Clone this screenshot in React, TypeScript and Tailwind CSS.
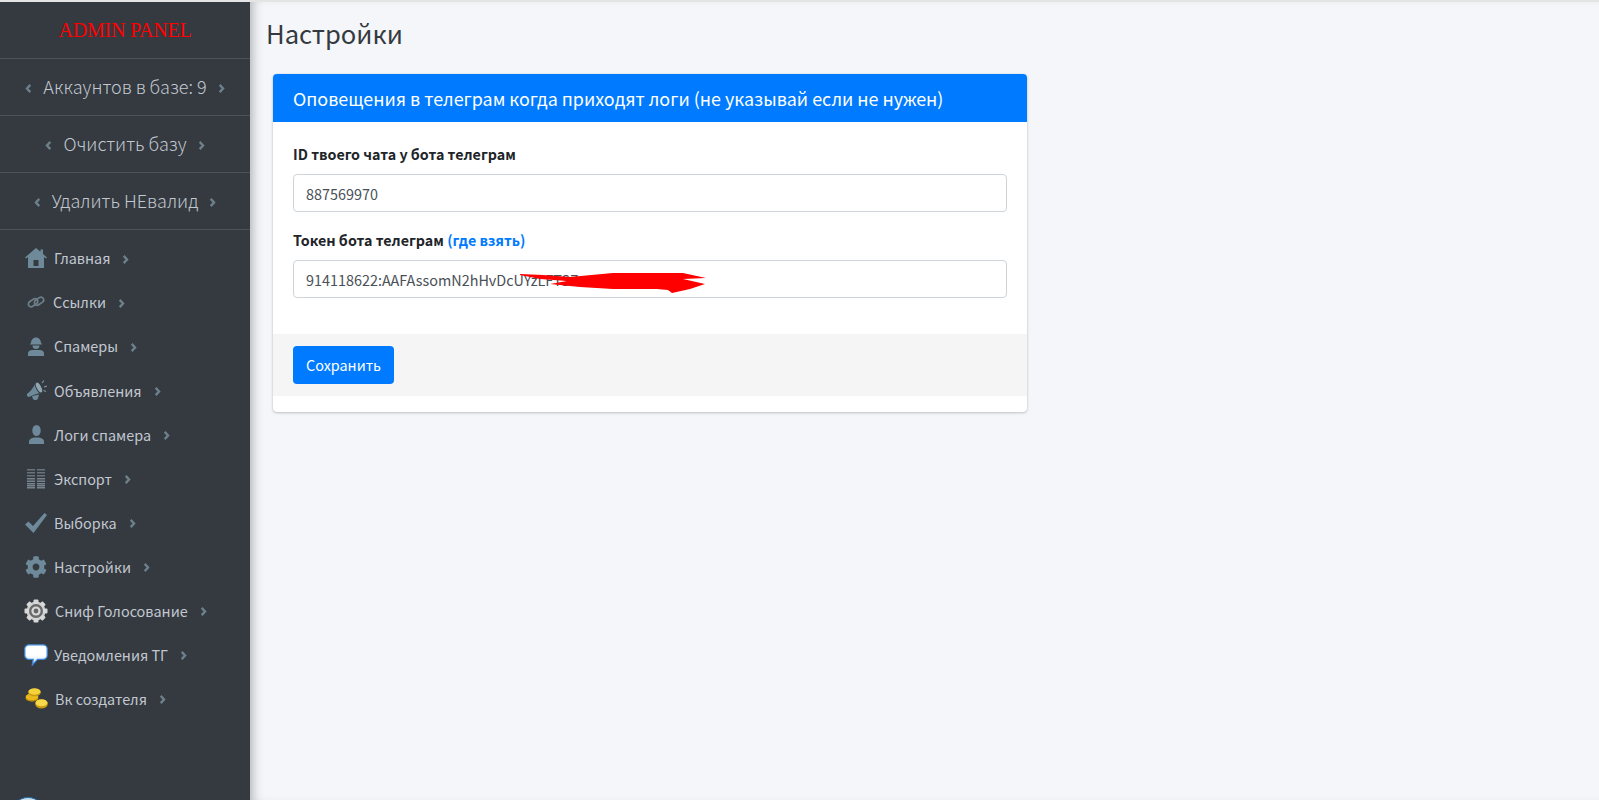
import { FaCog } from "react-icons/fa";
import type { ReactNode } from "react";

function Chevron({ left }: { left?: boolean }) {
  return (
    <svg viewBox="0 0 7 10" className="mt-[2px] h-[9px] w-[7px] shrink-0 fill-none stroke-[#6e808c] stroke-[2.6]">
      <polyline points={left ? "5.5,1 1.8,5 5.5,9" : "1.5,1 5.2,5 1.5,9"} />
    </svg>
  );
}

function HomeIcon() {
  return (
    <svg viewBox="0 0 22 20" className="h-[20px] w-[22px] shrink-0 fill-[#6e8a9a]">
      <path fillRule="evenodd" d="M11 0 L15.500 3.800 V1.500 H18 V6 L22 9.500 L21 10.500 L19 9 V20 H3 V9 L1 10.500 L0 9.500 Z M8.500 12 V18 H13.500 V12 Z" />
    </svg>
  );
}

function LinkIcon() {
  return (
    <svg viewBox="0 0 18 14" className="h-[14px] w-[18px] shrink-0 fill-none stroke-[#6e7f8a] stroke-[1.7]">
      <rect x="1" y="5" width="10" height="5.500" rx="2.700" transform="rotate(-35 6 7.700)" />
      <rect x="7" y="3.500" width="10" height="5.500" rx="2.700" transform="rotate(-35 12 6.200)" />
    </svg>
  );
}

function WorkerIcon() {
  return (
    <svg viewBox="0 0 16 19" className="h-[19px] w-[16px] shrink-0 fill-[#6e8a9a]">
      <path d="M3 6.500C3 3 5 .5 8 .5s5 2.500 5 6h1v1H2v-1z" />
      <path d="M4.500 8.500h7c0 2.500-1.500 3.500-3.500 3.500s-3.500-1-3.500-3.500z" />
      <path d="M0 19v-2.500C0 14 2.500 13 4.500 13h7c2 0 4.500 1 4.500 3.500V19z" />
    </svg>
  );
}

function HornIcon() {
  return (
    <svg viewBox="0 0 21 22" className="h-[22px] w-[21px] shrink-0">
      <path d="M1 15 C4 13 8 8 10 3 L16 14 C12 14 7 16 3 18 C1.500 18 .5 16.500 1 15z" fill="#6e8a9a" />
      <ellipse cx="13" cy="8.500" rx="2.700" ry="6" transform="rotate(-28 13 8.500)" fill="#8fa5b1" stroke="#343a40" strokeWidth="1" />
      <path d="M6 17 L13 15.500 L12 19.500 C11 21.500 8 21.500 7 20z" fill="#6e8a9a" />
      <path d="M16 4 L18 1.500 M18 8 L21 7 M17.500 11.500 L20 12.500" stroke="#7d93a0" strokeWidth="1.200" fill="none" />
    </svg>
  );
}

function UserIcon() {
  return (
    <svg viewBox="0 0 15 19" className="h-[19px] w-[15px] shrink-0 fill-[#6e8a9a]">
      <ellipse cx="7.500" cy="5.500" rx="4.200" ry="5.500" />
      <path d="M0 19v-2.500C0 14 3 13 5 12.500h5c2 .5 5 1.500 5 4V19z" />
    </svg>
  );
}

function ExportIcon() {
  return (
    <svg viewBox="0 0 20 20" className="h-[20px] w-[20px] shrink-0">
      {[0, 3, 6, 9, 11.500, 14, 16, 18].map((y, i) => (
        <g key={y} fill={i < 3 ? "#68757f" : "#77848e"}>
          <rect x="1" y={y} width="8" height="1.500" />
          <rect x="11" y={y} width="8" height="1.500" />
        </g>
      ))}
    </svg>
  );
}

function CheckIcon() {
  return (
    <svg viewBox="0 0 22 20" className="h-[20px] w-[22px] shrink-0 fill-[#6e8a9a]">
      <path d="M0 11.500 L3.500 8.500 L8 13 L19.500 0 L22 2 L8.500 20 Z" />
    </svg>
  );
}

function SniffIcon() {
  return (
    <svg viewBox="0 0 24 24" className="h-[24px] w-[24px] shrink-0">
      <circle cx="12" cy="12" r="9.500" fill="#c9c9c9" />
      {[0, 45, 90, 135, 180, 225, 270, 315].map((a) => (
        <rect key={a} x="9.500" y="0.500" width="5" height="5" rx="1" fill="#d8d8d8" transform={`rotate(${a} 12 12)`} />
      ))}
      <circle cx="12" cy="12" r="7" fill="#6b6b6b" />
      <circle cx="12" cy="12" r="4.600" fill="#d8d8d8" />
      <circle cx="12" cy="12" r="2.400" fill="#666666" />
    </svg>
  );
}

function BubbleIcon() {
  return (
    <svg viewBox="0 0 24 22" className="h-[22px] w-[24px] shrink-0">
      <defs>
        <linearGradient id="bubble" x1="0" y1="0" x2="0" y2="1">
          <stop offset="0.500" stopColor="#ffffff" />
          <stop offset="1" stopColor="#c8e0f5" />
        </linearGradient>
      </defs>
      <path
        d="M5 .8h14c2.300 0 4.200 1.700 4.200 3.800v7c0 2.100-1.900 3.800-4.200 3.800h-5.500L8.300 21l.9-5.600H5C2.700 15.400.8 13.700.8 11.600v-7C.8 2.500 2.700.8 5 .8z"
        fill="url(#bubble)"
        stroke="#3a86d4"
        strokeWidth="1.300"
      />
    </svg>
  );
}

function CoinsIcon() {
  return (
    <svg viewBox="0 0 23 21" className="h-[21px] w-[23px] shrink-0">
      <ellipse cx="7" cy="10" rx="6.500" ry="3.700" fill="#c08f08" />
      <ellipse cx="7" cy="8.800" rx="6.300" ry="3.300" fill="#eab91c" />
      <ellipse cx="9.500" cy="4.500" rx="6.300" ry="3.800" fill="#c99a10" />
      <ellipse cx="9.500" cy="3.500" rx="6" ry="3.200" fill="#f6d23a" />
      <ellipse cx="16.500" cy="16" rx="6.300" ry="4.500" fill="#c99a10" />
      <ellipse cx="16.500" cy="14.800" rx="6" ry="3.500" fill="#f8d94a" />
    </svg>
  );
}

const items: { label: string; icon: ReactNode; gap: string }[] = [
  { label: "Главная", icon: <HomeIcon />, gap: "ml-[6px]" },
  { label: "Ссылки", icon: <LinkIcon />, gap: "ml-[5px]" },
  { label: "Спамеры", icon: <WorkerIcon />, gap: "ml-[6px]" },
  { label: "Объявления", icon: <HornIcon />, gap: "ml-[6px]" },
  { label: "Логи спамера", icon: <UserIcon />, gap: "ml-[6px]" },
  { label: "Экспорт", icon: <ExportIcon />, gap: "ml-[6px]" },
  { label: "Выборка", icon: <CheckIcon />, gap: "ml-[6px]" },
  { label: "Настройки", icon: <FaCog className="shrink-0 text-[22px] text-[#6e8a9a]" />, gap: "ml-[6px]" },
  { label: "Сниф Голосование", icon: <SniffIcon />, gap: "ml-[7px]" },
  { label: "Уведомления ТГ", icon: <BubbleIcon />, gap: "ml-[6px]" },
  { label: "Вк создателя", icon: <CoinsIcon />, gap: "ml-[7px]" },
];

const stats = ["Аккаунтов в базе: 9", "Очистить базу", "Удалить НЕвалид"];

export default function App() {
  return (
    <div
      className="flex h-[800px] flex-col overflow-hidden bg-[#f4f6fa]"
      style={{ fontFamily: '"Noto Sans CJK SC", "Noto Sans", sans-serif' }}
    >
      <div className="h-[2px] shrink-0 bg-[#e4e4e4]" />
      <div className="flex min-h-0 flex-1">
        <aside className="relative flex w-[250px] shrink-0 flex-col overflow-hidden bg-[#343a40]">
          <div
            className="flex h-[57px] shrink-0 items-center justify-center border-b border-[#4b545c] text-[20px] tracking-[-0.2px] text-[#ff0000]"
            style={{ fontFamily: '"Liberation Serif", serif' }}
          >
            ADMIN PANEL
          </div>
          {stats.map((s) => (
            <div
              key={s}
              className="flex h-[57px] shrink-0 items-center justify-center gap-[11px] border-b border-[#4b545c] text-[18px] font-light text-[#c2c7d0]"
            >
              <Chevron left />
              <span className="pb-[2px]">{s}</span>
              <Chevron />
            </div>
          ))}
          <nav className="flex flex-col pt-[6px]">
            {items.map((it) => (
              <div key={it.label} className="flex h-[44.100px] items-center pl-[24px] text-[14.400px] text-[#c2c7d0]">
                <span className="flex w-[24px] shrink-0 items-center justify-center">{it.icon}</span>
                <span className={it.gap}>{it.label}</span>
                <span className="ml-[12px]">
                  <Chevron />
                </span>
              </div>
            ))}
          </nav>
          <div className="absolute bottom-[-31px] left-[11px] h-[34px] w-[34px] rounded-full border border-[#1f6fb0] bg-[#cfdde6]" />
        </aside>
        <main className="flex-1 bg-[#f4f6fa] pl-[16px] pt-[13px] shadow-[inset_10px_0_12px_-8px_rgba(0,0,0,0.3)]">
          <h1 className="text-[25.600px] leading-[36px] text-[#343a40]">Настройки</h1>
          <section className="ml-[7px] mt-[23px] w-[754px] overflow-hidden rounded-[4px] bg-white shadow-[0_0_1px_rgba(0,0,0,0.2),0_1px_3px_rgba(0,0,0,0.2)]">
            <div className="flex h-[48px] items-center bg-[#007bff] px-[20px] text-[17.900px] text-white">
              Оповещения в телеграм когда приходят логи (не указывай если не нужен)
            </div>
            <div className="px-[20px] pt-[20px] pb-[36px]">
              <div className="text-[14.300px] font-bold leading-[24px] text-[#212529]">ID твоего чата у бота телеграм</div>
              <input
                readOnly
                value="887569970"
                className="mt-[8px] block h-[38px] w-full rounded-[4px] border border-[#ced4da] px-[12px] text-[14.400px] text-[#495057] outline-none"
              />
              <div className="mt-[16px] text-[14.300px] font-bold leading-[24px] text-[#212529]">
                Токен бота телеграм <span className="text-[#007bff]">(где взять)</span>
              </div>
              <div className="relative mt-[8px]">
                <input
                  readOnly
                  value="914118622:AAFAssomN2hHvDcUYzLFTSZ"
                  className="block h-[38px] w-full rounded-[4px] border border-[#ced4da] px-[12px] text-[14.400px] text-[#495057] outline-none"
                />
                <svg viewBox="0 0 186 21" className="absolute left-[227px] top-[12px] h-[21px] w-[186px]">
                  <path
                    d="M0 2 L23 3 L50 5 L93 1 L163 1 L186 6 L163 7 L185 12 L170 17 L152 21 L148 18 L137 17 L93 17 L60 15 L30 12 L47 9 L20 7 L0 3 Z"
                    fill="#ff0000"
                  />
                </svg>
              </div>
            </div>
            <div className="bg-[#f5f5f5] px-[20px] py-[12px]">
              <button className="h-[38px] rounded-[4px] bg-[#007bff] px-[13px] text-[14.400px] text-white">Сохранить</button>
            </div>
            <div className="h-[16px]" />
          </section>
        </main>
      </div>
    </div>
  );
}
